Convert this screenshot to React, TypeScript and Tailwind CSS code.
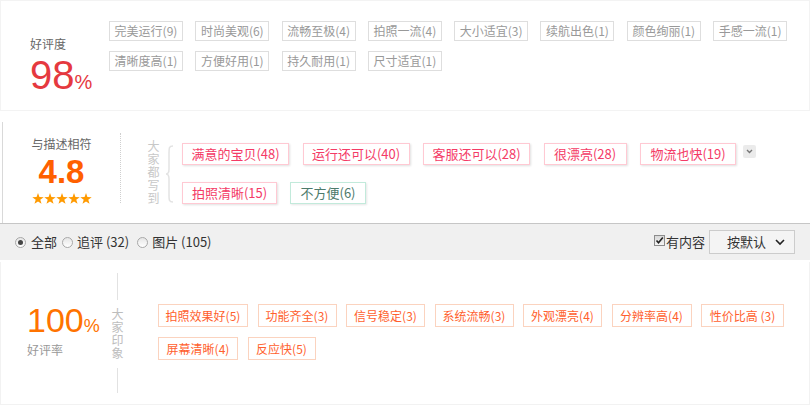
import React from 'react'

const cjk = "font-['Noto_Sans_CJK_SC','Liberation_Sans',sans-serif]"

const topTags = [
  ['完美运行(9)', '时尚美观(6)', '流畅至极(4)', '拍照一流(4)', '大小适宜(3)', '续航出色(1)', '颜色绚丽(1)', '手感一流(1)'],
  ['清晰度高(1)', '方便好用(1)', '持久耐用(1)', '尺寸适宜(1)'],
]

const impressions = [
  [
    { text: '拍照效果好(5)', w: 'w-[90px]' },
    { text: '功能齐全(3)', w: 'w-[79px]' },
    { text: '信号稳定(3)', w: 'w-[79px]' },
    { text: '系统流畅(3)', w: 'w-[79px]' },
    { text: '外观漂亮(4)', w: 'w-[79px]' },
    { text: '分辨率高(4)', w: 'w-[80px]' },
    { text: '性价比高 (3)', w: 'w-[83px]' },
  ],
  [
    { text: '屏幕清晰(4)', w: 'w-[80px]' },
    { text: '反应快(5)', w: 'w-[68px]' },
  ],
]

const Star = () => (
  <svg width="12" height="11" viewBox="0 0 12 11" className="block">
    <polygon
      points="6,0 7.41,4.06 11.71,4.15 8.28,6.74 9.53,10.85 6,8.4 2.47,10.85 3.72,6.74 0.29,4.15 4.59,4.06"
      fill="#ff9a00"
    />
  </svg>
)

const PinkTag = ({ text, w }: { text: string; w: string }) => (
  <div
    className={`${w} h-[22px] border border-[#ffc9d3] bg-white text-[13px] leading-[20px] text-center text-[#f43b66] shadow-[1px_1px_2px_rgba(0,0,0,0.12)]`}
  >
    {text}
  </div>
)

const Radio = ({ checked }: { checked?: boolean }) => (
  <span className="w-[11px] h-[11px] rounded-full border border-[#a8a8a8] bg-gradient-to-b from-[#e6e6e6] to-white flex items-center justify-center">
    {checked && <span className="w-[5px] h-[5px] rounded-full bg-[#444]" />}
  </span>
)

// stacked one-char-per-line label, as a single vertical text run
const VerticalText = ({ text, color }: { text: string; color: string }) => (
  <div className={`[writing-mode:vertical-rl] text-[12px] leading-[12px] tracking-[1px] ${color}`}>{text}</div>
)

export default function App() {
  return (
    <div className={`w-[810px] h-[405px] bg-white overflow-hidden flex flex-col ${cjk}`}>
      {/* 好评度 */}
      <div className="h-[111px] border border-[#f3f3f3] flex">
        <div className="w-[108px] pl-[29px] pt-[37px]">
          <div className="text-[12px] leading-[12px] text-[#666]">好评度</div>
          <div className="mt-[5px] text-[#e5393f] font-['Liberation_Sans',sans-serif] leading-none whitespace-nowrap">
            <span className="text-[40px]">98</span>
            <span className="text-[20px]">%</span>
          </div>
        </div>
        <div className="pt-[20px] flex flex-col gap-y-[10px]">
          {topTags.map((row, r) => (
            <div key={r} className="flex gap-x-[12.3px]">
              {row.map((t) => (
                <div
                  key={t}
                  className="w-[74px] h-[20px] border border-[#dedede] text-[12px] leading-[18px] text-center text-[#999]"
                >
                  {t}
                </div>
              ))}
            </div>
          ))}
        </div>
      </div>

      {/* 与描述相符 */}
      <div className="mt-[11px] ml-[2px] h-[101px] border-l border-[#d9d9d9] flex items-start">
        <div className="w-[117px] pt-[16px] flex flex-col items-center">
          <div className="text-[12px] leading-[12px] text-[#666]">与描述相符</div>
          <div className="mt-[4.5px] text-[33px] leading-none font-bold text-[#ff6000] font-['Liberation_Sans',sans-serif]">
            4.8
          </div>
          <div className="mt-[5px] flex">
            <Star />
            <Star />
            <Star />
            <Star />
            <Star />
          </div>
        </div>
        <div className="mt-[11px] h-[70px] border-l border-dotted border-[#cfcfcf]" />
        <div className="ml-[26px] mt-[18px]">
          <VerticalText text="大家都写到" color="text-[#c8c8c8]" />
        </div>
        <svg width="9" height="58" viewBox="0 0 9 58" className="ml-[6px] mt-[23px]" fill="none">
          <path
            d="M8 1 C4 1 4 3 4 8 L4 24 C4 27 3 29 1 29 C3 29 4 31 4 34 L4 50 C4 55 4 57 8 57"
            stroke="#e3e3e3"
            strokeWidth="1.5"
          />
        </svg>
        <div className="ml-[8px] mt-[21px] flex flex-col gap-y-[17px]">
          <div className="flex items-start gap-x-[13.5px]">
            <PinkTag text="满意的宝贝(48)" w="w-[107px]" />
            <PinkTag text="运行还可以(40)" w="w-[107px]" />
            <PinkTag text="客服还可以(28)" w="w-[107px]" />
            <PinkTag text="很漂亮(28)" w="w-[83px]" />
            <div className="flex items-start gap-x-[7px]">
              <PinkTag text="物流也快(19)" w="w-[96px]" />
              <div className="mt-[2px] w-[13px] h-[13px] rounded-[2px] bg-[#ebebeb] flex items-center justify-center">
                <svg width="9" height="9" viewBox="0 0 9 9" fill="none">
                  <path d="M2 3l2.5 2.5L7 3" stroke="#777" strokeWidth="1.4" />
                </svg>
              </div>
            </div>
          </div>
          <div className="flex gap-x-[13px]">
            <PinkTag text="拍照清晰(15)" w="w-[95px]" />
            <div className="w-[76px] h-[22px] border border-[#c2eadb] bg-white text-[13px] leading-[20px] text-center text-[#4d7a6b] shadow-[1px_1px_2px_rgba(0,0,0,0.1)]">
              不方便(6)
            </div>
          </div>
        </div>
      </div>

      {/* 筛选栏 */}
      <div className="h-[37px] border-t border-[#c6c6c6] bg-[#f0f0f0] flex items-center justify-between pl-[15px] pr-[15px] text-[13px] text-[#333]">
        <div className="flex items-center">
          <Radio checked />
          <span className="ml-[5px]">全部</span>
          <span className="ml-[5px]">
            <Radio />
          </span>
          <span className="ml-[4px]">追评 (32)</span>
          <span className="ml-[8px]">
            <Radio />
          </span>
          <span className="ml-[4px]">图片 (105)</span>
        </div>
        <div className="flex items-center">
          <span className="w-[11px] h-[11px] -mt-[3px] border border-[#8c8c8c] bg-gradient-to-b from-[#d8d8d8] to-[#f4f4f4] flex items-center justify-center">
            <svg width="9" height="9" viewBox="0 0 9 9" fill="none">
              <path d="M1.5 4.5l2 2.2L7.8 1.5" stroke="#222" strokeWidth="1.6" />
            </svg>
          </span>
          <span className="ml-[1px]">有内容</span>
          <div className="ml-[4px] w-[86px] h-[24px] border border-[#cccccc] bg-[#f4f4f4] flex items-center pl-[17px] pr-[9px] justify-between">
            <span>按默认</span>
            <svg width="10" height="8" viewBox="0 0 10 8" fill="none">
              <path d="M1 2l4 4 4-4" stroke="#222" strokeWidth="1.6" />
            </svg>
          </div>
        </div>
      </div>

      {/* 好评率 */}
      <div className="mt-[2px] h-[143px] border-x border-b border-[#f2f2f2] flex items-start">
        <div className="w-[110px] pl-[26px] pt-[40.5px]">
          <div className="text-[#ff7300] font-['Liberation_Sans',sans-serif] leading-none whitespace-nowrap">
            <span className="text-[34px]">100</span>
            <span className="text-[18px]">%</span>
          </div>
          <div className="mt-[7px] text-[12px] leading-[12px] text-[#999]">好评率</div>
        </div>
        <div className="w-[12px] flex flex-col items-center">
          <div className="mt-[11px] h-[27px] border-l border-[#e2e2e2]" />
          <div className="mt-[8px]">
            <VerticalText text="大家印象" color="text-[#bdbdbd]" />
          </div>
          <div className="mt-[8px] h-[25px] border-l border-[#e2e2e2]" />
        </div>
        <div className="ml-[35px] mt-[42px] flex flex-col gap-y-[10px]">
          {impressions.map((row, r) => (
            <div key={r} className="flex gap-x-[9.5px]">
              {row.map((t) => (
                <div
                  key={t.text}
                  className={`${t.w} h-[23px] border border-[#fbd3bf] text-[12px] leading-[21px] text-center text-[#ff5f2e]`}
                >
                  {t.text}
                </div>
              ))}
            </div>
          ))}
        </div>
      </div>
    </div>
  )
}
